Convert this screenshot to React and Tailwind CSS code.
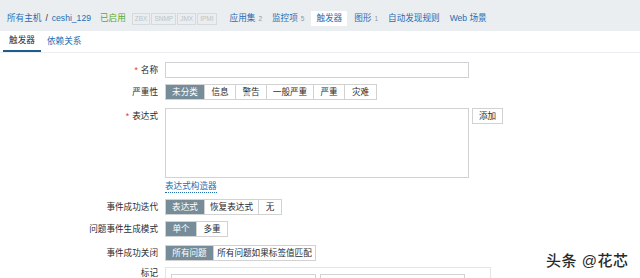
const font = { fontFamily: '"Liberation Sans", "Noto Sans CJK SC", sans-serif' };

const NavLink = ({ label, count, active }) => (
  <span
    className={`flex items-center h-[15px] whitespace-nowrap ${active ? 'bg-white px-[5px]' : 'px-[3px]'} text-[#1f6db3]`}
  >
    {label}
    {count && <span className="ml-[3px] text-[6.5px] text-[#8a9aa5]">{count}</span>}
  </span>
);

const Seg = ({ items }) => (
  <div className="flex h-[16px]">
    {items.map((it, i) => (
      <span
        key={it.label}
        style={{ width: it.w }}
        className={`flex items-center justify-center whitespace-nowrap border border-[#d2d2d2] ${
          i > 0 ? 'border-l-0' : ''
        } ${it.on ? 'bg-[#768d99] border-[#768d99] text-white' : 'bg-white text-[#1f2c33]'}`}
      >
        {it.label}
      </span>
    ))}
  </div>
);

const Label = ({ children, req }) => (
  <div className="text-right text-[#1f2c33] leading-none whitespace-nowrap">
    {req && <span className="text-[#e33734] mr-[3px]">*</span>}
    {children}
  </div>
);

export default function App() {
  return (
    <div style={font} className="w-[640px] h-[278px] bg-white overflow-hidden relative text-[8.6px]">
      {/* host nav */}
      <div className="h-[31px] bg-[#ebeef0] flex items-center pl-[7px] pt-[6px]">
        <span className="text-[#1f6db3]">所有主机</span>
        <span className="mx-[4px] text-[#1f2c33]">/</span>
        <span className="text-[#1f6db3]">ceshi_129</span>
        <span className="ml-[9px] text-[#59a830]">已启用</span>
        <div className="ml-[6px] flex gap-[1px] text-[6.5px] text-[#bcc3c7]">
          {['ZBX', 'SNMP', 'JMX', 'IPMI'].map((t) => (
            <span key={t} className="border border-[#d5dadd] px-[2px] leading-[10px]">{t}</span>
          ))}
        </div>
        <div className="ml-[10px] flex items-center gap-[4px]">
          <NavLink label="应用集" count="2" />
          <NavLink label="监控项" count="5" />
          <NavLink label="触发器" active />
          <NavLink label="图形" count="1" />
          <NavLink label="自动发现规则" />
          <NavLink label="Web 场景" />
        </div>
      </div>

      {/* tabs */}
      <div className="flex h-[22px] border-b border-[#ebeef0] pl-[3px]">
        <span className="w-[38px] flex items-center justify-center border-b-[2px] border-[#1f5d8f] text-[#1f2c33]">触发器</span>
        <span className="ml-[6px] flex items-center text-[#1f6db3]">依赖关系</span>
      </div>

      {/* form */}
      <div className="grid grid-cols-[158px_1fr] gap-x-[7px] mt-[9px] items-center">
        <Label req>名称</Label>
        <div className="h-[16px] w-[304px] border border-[#d2d2d2]" />

        <div className="col-span-2 h-[6px]" />
        <Label>严重性</Label>
        <Seg
          items={[
            { label: '未分类', w: 40, on: true },
            { label: '信息', w: 31 },
            { label: '警告', w: 31 },
            { label: '一般严重', w: 47 },
            { label: '严重', w: 31 },
            { label: '灾难', w: 32 },
          ]}
        />

        <div className="col-span-2 h-[8px]" />
        <div className="self-start pt-[4px]"><Label req>表达式</Label></div>
        <div className="flex items-start gap-[3px]">
          <div className="h-[70px] w-[304px] border border-[#d2d2d2]" />
          <span className="h-[16px] w-[31px] border border-[#d2d2d2] flex items-center justify-center text-[#1f2c33]">添加</span>
        </div>

        <div />
        <div className="h-[17px] flex items-center text-[#1f6db3]">
          <span className="border-b border-dotted border-[#1f6db3] leading-[11px]">表达式构造器</span>
        </div>

        <div className="col-span-2 h-[4px]" />
        <Label>事件成功迭代</Label>
        <Seg
          items={[
            { label: '表达式', w: 40, on: true },
            { label: '恢复表达式', w: 54 },
            { label: '无', w: 23 },
          ]}
        />

        <div className="col-span-2 h-[6px]" />
        <Label>问题事件生成模式</Label>
        <Seg
          items={[
            { label: '单个', w: 32, on: true },
            { label: '多重', w: 31 },
          ]}
        />

        <div className="col-span-2 h-[8px]" />
        <Label>事件成功关闭</Label>
        <Seg
          items={[
            { label: '所有问题', w: 49, on: true },
            { label: '所有问题如果标签值匹配', w: 102 },
          ]}
        />

        <div className="col-span-2 h-[6px]" />
        <div className="self-start pt-[2px]"><Label>标记</Label></div>
        <div className="w-[326px] h-[20px] border border-[#e4e4e4] flex gap-[4px] pt-[6px] pl-[5px]">
          <div className="w-[145px] h-[16px] border border-[#d2d2d2]" />
          <div className="w-[145px] h-[16px] border border-[#d2d2d2]" />
        </div>
      </div>

      {/* watermark */}
      <div
        className="absolute left-[546px] top-[250px] text-[15px] font-medium text-[#2a2a2a] tracking-[0.5px]"
        style={{ textShadow: '0 0 2px #fff, 0 0 2px #fff' }}
      >
        头条 @花芯
      </div>
    </div>
  );
}
